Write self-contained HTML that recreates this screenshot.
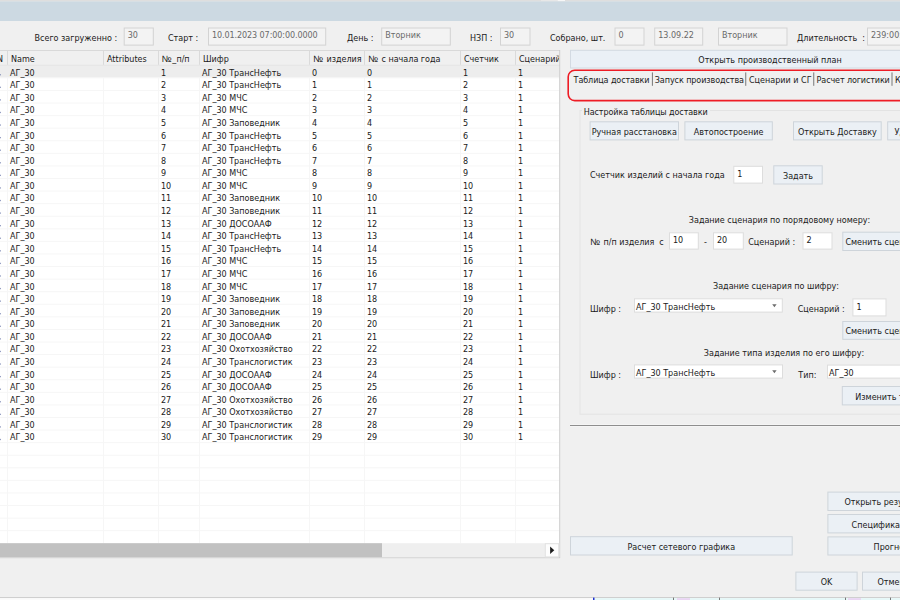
<!DOCTYPE html>
<html lang="ru"><head><meta charset="utf-8"><title>Производственный план</title>
<style>
html,body{margin:0;padding:0}
body{width:900px;height:600px;overflow:hidden;background:#f0f0f0;position:relative;
 font-family:'DejaVu Sans Condensed','DejaVu Sans','Liberation Sans',sans-serif;font-stretch:condensed;font-size:8.95px;color:#1a1a1a;line-height:12px}
div{position:absolute;white-space:nowrap;box-sizing:border-box;height:12px;line-height:12px}
svg{position:absolute;left:0;top:0}
.g{color:#6a6a6a}
.c{text-align:center}
span.no{font-family:'Liberation Sans',sans-serif;font-stretch:normal;font-size:9.2px;margin-right:1px}
#tb{left:0;top:0;width:559px;height:600px;overflow:hidden}
</style></head><body>
<svg width="900" height="600" viewBox="0 0 900 600">
<rect x="0.00" y="0.00" width="900.00" height="1.40" fill="#dedede"/>
<rect x="541.00" y="0.00" width="16.60" height="1.20" fill="#e7e7e7"/>
<rect x="557.60" y="0.00" width="7.40" height="1.20" fill="#f6f6f6"/>
<rect x="0.00" y="1.40" width="900.00" height="19.60" fill="#ccd9e2"/>
<rect x="124.20" y="28.00" width="29.10" height="17.10" fill="#f3f3f3" stroke="#d3d3d3" stroke-width="1"/>
<rect x="208.50" y="28.00" width="117.20" height="17.10" fill="#f3f3f3" stroke="#d3d3d3" stroke-width="1"/>
<rect x="381.70" y="28.00" width="68.60" height="17.10" fill="#f3f3f3" stroke="#d3d3d3" stroke-width="1"/>
<rect x="500.50" y="28.00" width="29.50" height="17.10" fill="#f3f3f3" stroke="#d3d3d3" stroke-width="1"/>
<rect x="615.00" y="28.00" width="29.00" height="17.10" fill="#f3f3f3" stroke="#d3d3d3" stroke-width="1"/>
<rect x="654.70" y="28.00" width="48.00" height="17.10" fill="#f3f3f3" stroke="#d3d3d3" stroke-width="1"/>
<rect x="718.50" y="28.00" width="68.50" height="17.10" fill="#f3f3f3" stroke="#d3d3d3" stroke-width="1"/>
<rect x="867.50" y="28.00" width="92.00" height="17.10" fill="#f3f3f3" stroke="#d3d3d3" stroke-width="1"/>
<rect x="0.00" y="50.00" width="560.00" height="508.00" fill="#ffffff"/>
<rect x="0.00" y="50.00" width="559.50" height="15.30" fill="#f0f0f0"/>
<rect x="0.00" y="50.00" width="560.00" height="1" fill="#d9d9d9"/>
<rect x="0.00" y="64.80" width="560.00" height="1" fill="#dedede"/>
<rect x="0.00" y="65.70" width="559.50" height="11.88" fill="#ededed"/>
<rect x="0.00" y="77.38" width="559.50" height="1" fill="#f6f6f6"/>
<rect x="0.00" y="89.96" width="559.50" height="1" fill="#f6f6f6"/>
<rect x="0.00" y="102.53" width="559.50" height="1" fill="#f6f6f6"/>
<rect x="0.00" y="115.11" width="559.50" height="1" fill="#f6f6f6"/>
<rect x="0.00" y="127.69" width="559.50" height="1" fill="#f6f6f6"/>
<rect x="0.00" y="140.27" width="559.50" height="1" fill="#f6f6f6"/>
<rect x="0.00" y="152.85" width="559.50" height="1" fill="#f6f6f6"/>
<rect x="0.00" y="165.42" width="559.50" height="1" fill="#f6f6f6"/>
<rect x="0.00" y="178.00" width="559.50" height="1" fill="#f6f6f6"/>
<rect x="0.00" y="190.58" width="559.50" height="1" fill="#f6f6f6"/>
<rect x="0.00" y="203.16" width="559.50" height="1" fill="#f6f6f6"/>
<rect x="0.00" y="215.74" width="559.50" height="1" fill="#f6f6f6"/>
<rect x="0.00" y="228.31" width="559.50" height="1" fill="#f6f6f6"/>
<rect x="0.00" y="240.89" width="559.50" height="1" fill="#f6f6f6"/>
<rect x="0.00" y="253.47" width="559.50" height="1" fill="#f6f6f6"/>
<rect x="0.00" y="266.05" width="559.50" height="1" fill="#f6f6f6"/>
<rect x="0.00" y="278.63" width="559.50" height="1" fill="#f6f6f6"/>
<rect x="0.00" y="291.20" width="559.50" height="1" fill="#f6f6f6"/>
<rect x="0.00" y="303.78" width="559.50" height="1" fill="#f6f6f6"/>
<rect x="0.00" y="316.36" width="559.50" height="1" fill="#f6f6f6"/>
<rect x="0.00" y="328.94" width="559.50" height="1" fill="#f6f6f6"/>
<rect x="0.00" y="341.52" width="559.50" height="1" fill="#f6f6f6"/>
<rect x="0.00" y="354.09" width="559.50" height="1" fill="#f6f6f6"/>
<rect x="0.00" y="366.67" width="559.50" height="1" fill="#f6f6f6"/>
<rect x="0.00" y="379.25" width="559.50" height="1" fill="#f6f6f6"/>
<rect x="0.00" y="391.83" width="559.50" height="1" fill="#f6f6f6"/>
<rect x="0.00" y="404.41" width="559.50" height="1" fill="#f6f6f6"/>
<rect x="0.00" y="416.98" width="559.50" height="1" fill="#f6f6f6"/>
<rect x="0.00" y="429.56" width="559.50" height="1" fill="#f6f6f6"/>
<rect x="0.00" y="442.14" width="559.50" height="1" fill="#f6f6f6"/>
<rect x="0.00" y="454.72" width="559.50" height="1" fill="#f6f6f6"/>
<rect x="0.00" y="467.30" width="559.50" height="1" fill="#f6f6f6"/>
<rect x="0.00" y="479.87" width="559.50" height="1" fill="#f6f6f6"/>
<rect x="0.00" y="492.45" width="559.50" height="1" fill="#f6f6f6"/>
<rect x="0.00" y="505.03" width="559.50" height="1" fill="#f6f6f6"/>
<rect x="0.00" y="517.61" width="559.50" height="1" fill="#f6f6f6"/>
<rect x="0.00" y="530.19" width="559.50" height="1" fill="#f6f6f6"/>
<rect x="7.00" y="51.00" width="1" height="13.80" fill="#dadada"/>
<rect x="7.00" y="77.88" width="1" height="465.32" fill="#f6f6f6"/>
<rect x="103.00" y="51.00" width="1" height="13.80" fill="#dadada"/>
<rect x="103.00" y="77.88" width="1" height="465.32" fill="#f6f6f6"/>
<rect x="158.00" y="51.00" width="1" height="13.80" fill="#dadada"/>
<rect x="158.00" y="77.88" width="1" height="465.32" fill="#f6f6f6"/>
<rect x="199.00" y="51.00" width="1" height="13.80" fill="#dadada"/>
<rect x="199.00" y="77.88" width="1" height="465.32" fill="#f6f6f6"/>
<rect x="309.00" y="51.00" width="1" height="13.80" fill="#dadada"/>
<rect x="309.00" y="77.88" width="1" height="465.32" fill="#f6f6f6"/>
<rect x="364.00" y="51.00" width="1" height="13.80" fill="#dadada"/>
<rect x="364.00" y="77.88" width="1" height="465.32" fill="#f6f6f6"/>
<rect x="460.00" y="51.00" width="1" height="13.80" fill="#dadada"/>
<rect x="460.00" y="77.88" width="1" height="465.32" fill="#f6f6f6"/>
<rect x="515.00" y="51.00" width="1" height="13.80" fill="#dadada"/>
<rect x="515.00" y="77.88" width="1" height="465.32" fill="#f6f6f6"/>
<rect x="559.20" y="50.00" width="1" height="508.00" fill="#cdcdcd"/>
<rect x="0.00" y="557.20" width="560.00" height="1" fill="#cdcdcd"/>
<rect x="0.00" y="74.09" width="0.80" height="1.30" fill="#7c88b4"/>
<rect x="0.00" y="86.67" width="0.80" height="1.30" fill="#7c88b4"/>
<rect x="0.00" y="99.25" width="0.80" height="1.30" fill="#7c88b4"/>
<rect x="0.00" y="111.82" width="0.80" height="1.30" fill="#7c88b4"/>
<rect x="0.00" y="124.40" width="0.80" height="1.30" fill="#7c88b4"/>
<rect x="0.00" y="136.98" width="0.80" height="1.30" fill="#7c88b4"/>
<rect x="0.00" y="149.56" width="0.80" height="1.30" fill="#7c88b4"/>
<rect x="0.00" y="162.13" width="0.80" height="1.30" fill="#7c88b4"/>
<rect x="0.00" y="174.71" width="0.80" height="1.30" fill="#7c88b4"/>
<rect x="0.00" y="187.29" width="0.80" height="1.30" fill="#7c88b4"/>
<rect x="0.00" y="199.87" width="0.80" height="1.30" fill="#7c88b4"/>
<rect x="0.00" y="212.45" width="0.80" height="1.30" fill="#7c88b4"/>
<rect x="0.00" y="225.02" width="0.80" height="1.30" fill="#7c88b4"/>
<rect x="0.00" y="237.60" width="0.80" height="1.30" fill="#7c88b4"/>
<rect x="0.00" y="250.18" width="0.80" height="1.30" fill="#7c88b4"/>
<rect x="0.00" y="262.76" width="0.80" height="1.30" fill="#7c88b4"/>
<rect x="0.00" y="275.34" width="0.80" height="1.30" fill="#7c88b4"/>
<rect x="0.00" y="287.91" width="0.80" height="1.30" fill="#7c88b4"/>
<rect x="0.00" y="300.49" width="0.80" height="1.30" fill="#7c88b4"/>
<rect x="0.00" y="313.07" width="0.80" height="1.30" fill="#7c88b4"/>
<rect x="0.00" y="325.65" width="0.80" height="1.30" fill="#7c88b4"/>
<rect x="0.00" y="338.23" width="0.80" height="1.30" fill="#7c88b4"/>
<rect x="0.00" y="350.81" width="0.80" height="1.30" fill="#7c88b4"/>
<rect x="0.00" y="363.38" width="0.80" height="1.30" fill="#7c88b4"/>
<rect x="0.00" y="375.96" width="0.80" height="1.30" fill="#7c88b4"/>
<rect x="0.00" y="388.54" width="0.80" height="1.30" fill="#7c88b4"/>
<rect x="0.00" y="401.12" width="0.80" height="1.30" fill="#7c88b4"/>
<rect x="0.00" y="413.69" width="0.80" height="1.30" fill="#7c88b4"/>
<rect x="0.00" y="426.27" width="0.80" height="1.30" fill="#7c88b4"/>
<rect x="0.00" y="438.85" width="0.80" height="1.30" fill="#7c88b4"/>
<rect x="0.00" y="543.20" width="559.20" height="14.00" fill="#efefef"/>
<rect x="0.00" y="543.20" width="382.00" height="14.00" fill="#c1c1c1"/>
<rect x="545.30" y="543.70" width="13.40" height="13.20" fill="#fdfdfd" stroke="#e2e2e2" stroke-width="1"/>
<polygon points="550.1,546.6 554.3,550.3 550.1,554" fill="#1e1e1e"/>
<rect x="570.50" y="50.30" width="399.00" height="17.70" fill="#eaf0f6" stroke="#d3dae2" stroke-width="1"/>
<rect x="568.2" y="70.3" width="400" height="30.3" rx="6.5" fill="none" stroke="#ee1c25" stroke-width="1.6"/>
<rect x="651.90" y="72.40" width="1" height="13.40" fill="#777"/>
<rect x="745.25" y="72.40" width="1" height="13.40" fill="#777"/>
<rect x="813.25" y="72.40" width="1" height="13.40" fill="#777"/>
<rect x="891.50" y="72.40" width="1" height="13.40" fill="#777"/>
<rect x="580.00" y="110.50" width="399.50" height="303.70" fill="none" stroke="#e3e3e3" stroke-width="1"/>
<rect x="582.00" y="105.00" width="128.00" height="11.00" fill="#f0f0f0"/>
<rect x="590.10" y="121.80" width="88.40" height="18.10" fill="#ebf0f5" stroke="#ced4da" stroke-width="1"/>
<rect x="684.90" y="121.80" width="87.40" height="18.10" fill="#ebf0f5" stroke="#ced4da" stroke-width="1"/>
<rect x="793.50" y="121.80" width="87.70" height="18.10" fill="#ebf0f5" stroke="#ced4da" stroke-width="1"/>
<rect x="887.70" y="121.80" width="86.80" height="18.10" fill="#ebf0f5" stroke="#ced4da" stroke-width="1"/>
<rect x="733.80" y="166.30" width="28.70" height="16.80" fill="#ffffff" stroke="#dddddd" stroke-width="1"/>
<rect x="773.80" y="165.80" width="48.40" height="18.20" fill="#ebf0f5" stroke="#ced4da" stroke-width="1"/>
<rect x="669.50" y="232.80" width="28.80" height="16.30" fill="#ffffff" stroke="#dddddd" stroke-width="1"/>
<rect x="713.50" y="232.80" width="29.80" height="16.30" fill="#ffffff" stroke="#dddddd" stroke-width="1"/>
<rect x="803.00" y="232.80" width="29.00" height="16.30" fill="#ffffff" stroke="#dddddd" stroke-width="1"/>
<rect x="842.80" y="232.20" width="96.70" height="18.30" fill="#ebf0f5" stroke="#ced4da" stroke-width="1"/>
<rect x="634.50" y="298.80" width="147.80" height="13.30" fill="#ffffff" stroke="#dddddd" stroke-width="1"/>
<polygon points="772.2,304.3 776.6,304.3 774.4,307.3" fill="#6c6c6c"/>
<rect x="852.90" y="298.90" width="33.10" height="17.00" fill="#ffffff" stroke="#dddddd" stroke-width="1"/>
<rect x="842.80" y="321.50" width="96.70" height="17.80" fill="#ebf0f5" stroke="#ced4da" stroke-width="1"/>
<rect x="634.50" y="364.90" width="148.00" height="13.20" fill="#ffffff" stroke="#dddddd" stroke-width="1"/>
<polygon points="772.2,370.3 776.6,370.3 774.4,373.3" fill="#6c6c6c"/>
<rect x="827.50" y="365.10" width="132.00" height="13.00" fill="#ffffff" stroke="#dddddd" stroke-width="1"/>
<rect x="842.30" y="386.50" width="117.20" height="18.40" fill="#ebf0f5" stroke="#ced4da" stroke-width="1"/>
<rect x="570.00" y="424.20" width="330.00" height="2.6" fill="#f7f7f7"/>
<rect x="570.00" y="425.00" width="330.00" height="1" fill="#8e8e8e"/>
<rect x="827.90" y="492.10" width="131.60" height="18.40" fill="#ebf0f5" stroke="#ced4da" stroke-width="1"/>
<rect x="827.90" y="514.50" width="131.60" height="18.40" fill="#ebf0f5" stroke="#ced4da" stroke-width="1"/>
<rect x="827.90" y="536.90" width="131.60" height="18.10" fill="#ebf0f5" stroke="#ced4da" stroke-width="1"/>
<rect x="570.50" y="536.70" width="221.70" height="18.30" fill="#ebf0f5" stroke="#ced4da" stroke-width="1"/>
<rect x="795.90" y="572.10" width="61.20" height="18.10" fill="#ebf0f5" stroke="#ced4da" stroke-width="1"/>
<rect x="862.50" y="572.10" width="97.00" height="18.10" fill="#ebf0f5" stroke="#ced4da" stroke-width="1"/>
<rect x="0.00" y="597.10" width="900.00" height="1" fill="#cbcbcb"/>
<rect x="0.00" y="598.10" width="900.00" height="1.90" fill="#fbfbfb"/>
<rect x="593.00" y="598.10" width="307.00" height="1.90" fill="#e6f8f8"/>
<rect x="593.00" y="597.60" width="1.50" height="2.40" fill="#2030d0"/>
<rect x="673.00" y="597.60" width="1.00" height="2.40" fill="#777"/>
<rect x="719.00" y="597.60" width="1.00" height="2.40" fill="#777"/>
<rect x="845.00" y="597.60" width="1.00" height="2.40" fill="#777"/>
<rect x="890.00" y="597.60" width="1.00" height="2.40" fill="#777"/>
<rect x="677.00" y="598.10" width="13.00" height="1.90" fill="#ead6f3"/>
<rect x="848.00" y="598.10" width="13.00" height="1.90" fill="#ead6f3"/>
</svg>
<div id="tb">
<div style="left:-3.00px;top:53.00px;">N</div>
<div style="left:11.00px;top:53.00px;">Name</div>
<div style="left:107.00px;top:53.00px;">Attributes</div>
<div style="left:161.50px;top:53.00px;"><span class="no">№</span>_п/п</div>
<div style="left:203.00px;top:53.00px;">Шифр</div>
<div style="left:313.00px;top:53.00px;"><span class="no">№</span> изделия</div>
<div style="left:368.00px;top:53.00px;"><span class="no">№</span> с начала года</div>
<div style="left:464.00px;top:53.00px;">Счетчик</div>
<div style="left:519.00px;top:53.00px;">Сценарий</div>
<div style="left:10.00px;top:66.69px;">АГ_30</div>
<div style="left:161.00px;top:66.69px;">1</div>
<div style="left:202.00px;top:66.69px;">АГ_30 ТрансНефть</div>
<div style="left:312.00px;top:66.69px;">0</div>
<div style="left:367.00px;top:66.69px;">0</div>
<div style="left:463.00px;top:66.69px;">1</div>
<div style="left:518.00px;top:66.69px;">1</div>
<div style="left:10.00px;top:79.27px;">АГ_30</div>
<div style="left:161.00px;top:79.27px;">2</div>
<div style="left:202.00px;top:79.27px;">АГ_30 ТрансНефть</div>
<div style="left:312.00px;top:79.27px;">1</div>
<div style="left:367.00px;top:79.27px;">1</div>
<div style="left:463.00px;top:79.27px;">2</div>
<div style="left:518.00px;top:79.27px;">1</div>
<div style="left:10.00px;top:91.84px;">АГ_30</div>
<div style="left:161.00px;top:91.84px;">3</div>
<div style="left:202.00px;top:91.84px;">АГ_30 МЧС</div>
<div style="left:312.00px;top:91.84px;">2</div>
<div style="left:367.00px;top:91.84px;">2</div>
<div style="left:463.00px;top:91.84px;">3</div>
<div style="left:518.00px;top:91.84px;">1</div>
<div style="left:10.00px;top:104.42px;">АГ_30</div>
<div style="left:161.00px;top:104.42px;">4</div>
<div style="left:202.00px;top:104.42px;">АГ_30 МЧС</div>
<div style="left:312.00px;top:104.42px;">3</div>
<div style="left:367.00px;top:104.42px;">3</div>
<div style="left:463.00px;top:104.42px;">4</div>
<div style="left:518.00px;top:104.42px;">1</div>
<div style="left:10.00px;top:117.00px;">АГ_30</div>
<div style="left:161.00px;top:117.00px;">5</div>
<div style="left:202.00px;top:117.00px;">АГ_30 Заповедник</div>
<div style="left:312.00px;top:117.00px;">4</div>
<div style="left:367.00px;top:117.00px;">4</div>
<div style="left:463.00px;top:117.00px;">5</div>
<div style="left:518.00px;top:117.00px;">1</div>
<div style="left:10.00px;top:129.58px;">АГ_30</div>
<div style="left:161.00px;top:129.58px;">6</div>
<div style="left:202.00px;top:129.58px;">АГ_30 ТрансНефть</div>
<div style="left:312.00px;top:129.58px;">5</div>
<div style="left:367.00px;top:129.58px;">5</div>
<div style="left:463.00px;top:129.58px;">6</div>
<div style="left:518.00px;top:129.58px;">1</div>
<div style="left:10.00px;top:142.16px;">АГ_30</div>
<div style="left:161.00px;top:142.16px;">7</div>
<div style="left:202.00px;top:142.16px;">АГ_30 ТрансНефть</div>
<div style="left:312.00px;top:142.16px;">6</div>
<div style="left:367.00px;top:142.16px;">6</div>
<div style="left:463.00px;top:142.16px;">7</div>
<div style="left:518.00px;top:142.16px;">1</div>
<div style="left:10.00px;top:154.74px;">АГ_30</div>
<div style="left:161.00px;top:154.74px;">8</div>
<div style="left:202.00px;top:154.74px;">АГ_30 ТрансНефть</div>
<div style="left:312.00px;top:154.74px;">7</div>
<div style="left:367.00px;top:154.74px;">7</div>
<div style="left:463.00px;top:154.74px;">8</div>
<div style="left:518.00px;top:154.74px;">1</div>
<div style="left:10.00px;top:167.31px;">АГ_30</div>
<div style="left:161.00px;top:167.31px;">9</div>
<div style="left:202.00px;top:167.31px;">АГ_30 МЧС</div>
<div style="left:312.00px;top:167.31px;">8</div>
<div style="left:367.00px;top:167.31px;">8</div>
<div style="left:463.00px;top:167.31px;">9</div>
<div style="left:518.00px;top:167.31px;">1</div>
<div style="left:10.00px;top:179.89px;">АГ_30</div>
<div style="left:161.00px;top:179.89px;">10</div>
<div style="left:202.00px;top:179.89px;">АГ_30 МЧС</div>
<div style="left:312.00px;top:179.89px;">9</div>
<div style="left:367.00px;top:179.89px;">9</div>
<div style="left:463.00px;top:179.89px;">10</div>
<div style="left:518.00px;top:179.89px;">1</div>
<div style="left:10.00px;top:192.47px;">АГ_30</div>
<div style="left:161.00px;top:192.47px;">11</div>
<div style="left:202.00px;top:192.47px;">АГ_30 Заповедник</div>
<div style="left:312.00px;top:192.47px;">10</div>
<div style="left:367.00px;top:192.47px;">10</div>
<div style="left:463.00px;top:192.47px;">11</div>
<div style="left:518.00px;top:192.47px;">1</div>
<div style="left:10.00px;top:205.05px;">АГ_30</div>
<div style="left:161.00px;top:205.05px;">12</div>
<div style="left:202.00px;top:205.05px;">АГ_30 Заповедник</div>
<div style="left:312.00px;top:205.05px;">11</div>
<div style="left:367.00px;top:205.05px;">11</div>
<div style="left:463.00px;top:205.05px;">12</div>
<div style="left:518.00px;top:205.05px;">1</div>
<div style="left:10.00px;top:217.62px;">АГ_30</div>
<div style="left:161.00px;top:217.62px;">13</div>
<div style="left:202.00px;top:217.62px;">АГ_30 ДОСОААФ</div>
<div style="left:312.00px;top:217.62px;">12</div>
<div style="left:367.00px;top:217.62px;">12</div>
<div style="left:463.00px;top:217.62px;">13</div>
<div style="left:518.00px;top:217.62px;">1</div>
<div style="left:10.00px;top:230.20px;">АГ_30</div>
<div style="left:161.00px;top:230.20px;">14</div>
<div style="left:202.00px;top:230.20px;">АГ_30 ТрансНефть</div>
<div style="left:312.00px;top:230.20px;">13</div>
<div style="left:367.00px;top:230.20px;">13</div>
<div style="left:463.00px;top:230.20px;">14</div>
<div style="left:518.00px;top:230.20px;">1</div>
<div style="left:10.00px;top:242.78px;">АГ_30</div>
<div style="left:161.00px;top:242.78px;">15</div>
<div style="left:202.00px;top:242.78px;">АГ_30 ТрансНефть</div>
<div style="left:312.00px;top:242.78px;">14</div>
<div style="left:367.00px;top:242.78px;">14</div>
<div style="left:463.00px;top:242.78px;">15</div>
<div style="left:518.00px;top:242.78px;">1</div>
<div style="left:10.00px;top:255.36px;">АГ_30</div>
<div style="left:161.00px;top:255.36px;">16</div>
<div style="left:202.00px;top:255.36px;">АГ_30 МЧС</div>
<div style="left:312.00px;top:255.36px;">15</div>
<div style="left:367.00px;top:255.36px;">15</div>
<div style="left:463.00px;top:255.36px;">16</div>
<div style="left:518.00px;top:255.36px;">1</div>
<div style="left:10.00px;top:267.94px;">АГ_30</div>
<div style="left:161.00px;top:267.94px;">17</div>
<div style="left:202.00px;top:267.94px;">АГ_30 МЧС</div>
<div style="left:312.00px;top:267.94px;">16</div>
<div style="left:367.00px;top:267.94px;">16</div>
<div style="left:463.00px;top:267.94px;">17</div>
<div style="left:518.00px;top:267.94px;">1</div>
<div style="left:10.00px;top:280.51px;">АГ_30</div>
<div style="left:161.00px;top:280.51px;">18</div>
<div style="left:202.00px;top:280.51px;">АГ_30 МЧС</div>
<div style="left:312.00px;top:280.51px;">17</div>
<div style="left:367.00px;top:280.51px;">17</div>
<div style="left:463.00px;top:280.51px;">18</div>
<div style="left:518.00px;top:280.51px;">1</div>
<div style="left:10.00px;top:293.09px;">АГ_30</div>
<div style="left:161.00px;top:293.09px;">19</div>
<div style="left:202.00px;top:293.09px;">АГ_30 Заповедник</div>
<div style="left:312.00px;top:293.09px;">18</div>
<div style="left:367.00px;top:293.09px;">18</div>
<div style="left:463.00px;top:293.09px;">19</div>
<div style="left:518.00px;top:293.09px;">1</div>
<div style="left:10.00px;top:305.67px;">АГ_30</div>
<div style="left:161.00px;top:305.67px;">20</div>
<div style="left:202.00px;top:305.67px;">АГ_30 Заповедник</div>
<div style="left:312.00px;top:305.67px;">19</div>
<div style="left:367.00px;top:305.67px;">19</div>
<div style="left:463.00px;top:305.67px;">20</div>
<div style="left:518.00px;top:305.67px;">1</div>
<div style="left:10.00px;top:318.25px;">АГ_30</div>
<div style="left:161.00px;top:318.25px;">21</div>
<div style="left:202.00px;top:318.25px;">АГ_30 Заповедник</div>
<div style="left:312.00px;top:318.25px;">20</div>
<div style="left:367.00px;top:318.25px;">20</div>
<div style="left:463.00px;top:318.25px;">21</div>
<div style="left:518.00px;top:318.25px;">1</div>
<div style="left:10.00px;top:330.83px;">АГ_30</div>
<div style="left:161.00px;top:330.83px;">22</div>
<div style="left:202.00px;top:330.83px;">АГ_30 ДОСОААФ</div>
<div style="left:312.00px;top:330.83px;">21</div>
<div style="left:367.00px;top:330.83px;">21</div>
<div style="left:463.00px;top:330.83px;">22</div>
<div style="left:518.00px;top:330.83px;">1</div>
<div style="left:10.00px;top:343.41px;">АГ_30</div>
<div style="left:161.00px;top:343.41px;">23</div>
<div style="left:202.00px;top:343.41px;">АГ_30 Охотхозяйство</div>
<div style="left:312.00px;top:343.41px;">22</div>
<div style="left:367.00px;top:343.41px;">22</div>
<div style="left:463.00px;top:343.41px;">23</div>
<div style="left:518.00px;top:343.41px;">1</div>
<div style="left:10.00px;top:355.98px;">АГ_30</div>
<div style="left:161.00px;top:355.98px;">24</div>
<div style="left:202.00px;top:355.98px;">АГ_30 Транслогистик</div>
<div style="left:312.00px;top:355.98px;">23</div>
<div style="left:367.00px;top:355.98px;">23</div>
<div style="left:463.00px;top:355.98px;">24</div>
<div style="left:518.00px;top:355.98px;">1</div>
<div style="left:10.00px;top:368.56px;">АГ_30</div>
<div style="left:161.00px;top:368.56px;">25</div>
<div style="left:202.00px;top:368.56px;">АГ_30 ДОСОААФ</div>
<div style="left:312.00px;top:368.56px;">24</div>
<div style="left:367.00px;top:368.56px;">24</div>
<div style="left:463.00px;top:368.56px;">25</div>
<div style="left:518.00px;top:368.56px;">1</div>
<div style="left:10.00px;top:381.14px;">АГ_30</div>
<div style="left:161.00px;top:381.14px;">26</div>
<div style="left:202.00px;top:381.14px;">АГ_30 ДОСОААФ</div>
<div style="left:312.00px;top:381.14px;">25</div>
<div style="left:367.00px;top:381.14px;">25</div>
<div style="left:463.00px;top:381.14px;">26</div>
<div style="left:518.00px;top:381.14px;">1</div>
<div style="left:10.00px;top:393.72px;">АГ_30</div>
<div style="left:161.00px;top:393.72px;">27</div>
<div style="left:202.00px;top:393.72px;">АГ_30 Охотхозяйство</div>
<div style="left:312.00px;top:393.72px;">26</div>
<div style="left:367.00px;top:393.72px;">26</div>
<div style="left:463.00px;top:393.72px;">27</div>
<div style="left:518.00px;top:393.72px;">1</div>
<div style="left:10.00px;top:406.30px;">АГ_30</div>
<div style="left:161.00px;top:406.30px;">28</div>
<div style="left:202.00px;top:406.30px;">АГ_30 Охотхозяйство</div>
<div style="left:312.00px;top:406.30px;">27</div>
<div style="left:367.00px;top:406.30px;">27</div>
<div style="left:463.00px;top:406.30px;">28</div>
<div style="left:518.00px;top:406.30px;">1</div>
<div style="left:10.00px;top:418.87px;">АГ_30</div>
<div style="left:161.00px;top:418.87px;">29</div>
<div style="left:202.00px;top:418.87px;">АГ_30 Транслогистик</div>
<div style="left:312.00px;top:418.87px;">28</div>
<div style="left:367.00px;top:418.87px;">28</div>
<div style="left:463.00px;top:418.87px;">29</div>
<div style="left:518.00px;top:418.87px;">1</div>
<div style="left:10.00px;top:431.45px;">АГ_30</div>
<div style="left:161.00px;top:431.45px;">30</div>
<div style="left:202.00px;top:431.45px;">АГ_30 Транслогистик</div>
<div style="left:312.00px;top:431.45px;">29</div>
<div style="left:367.00px;top:431.45px;">29</div>
<div style="left:463.00px;top:431.45px;">30</div>
<div style="left:518.00px;top:431.45px;">1</div>
</div>
<div style="left:34.50px;top:31.80px;">Всего загруженно :</div>
<div class="g" style="left:127.70px;top:29.35px;">30</div>
<div style="left:168.00px;top:31.80px;">Старт :</div>
<div class="g" style="left:212.00px;top:29.35px;letter-spacing:-0.09px;">10.01.2023 07:00:00.0000</div>
<div style="left:347.00px;top:31.80px;">День :</div>
<div class="g" style="left:385.20px;top:29.35px;">Вторник</div>
<div style="left:470.00px;top:31.80px;">НЗП :</div>
<div class="g" style="left:504.00px;top:29.35px;">30</div>
<div style="left:550.00px;top:31.80px;">Собрано, шт.</div>
<div class="g" style="left:618.50px;top:29.35px;">0</div>
<div class="g" style="left:658.20px;top:29.35px;">13.09.22</div>
<div class="g" style="left:722.00px;top:29.35px;">Вторник</div>
<div style="left:797.00px;top:31.80px;">Длительность &nbsp;:</div>
<div class="g" style="left:871.00px;top:29.35px;">239:00:00</div>
<div class="c" style="left:570.00px;top:54.10px;width:400.00px;">Открыть производственный план</div>
<div style="left:573.60px;top:74.10px;letter-spacing:-0.1px;">Таблица доставки</div>
<div style="left:654.80px;top:74.10px;letter-spacing:-0.085px;">Запуск производства</div>
<div style="left:749.00px;top:74.10px;">Сценарии и СГ</div>
<div style="left:816.60px;top:74.10px;letter-spacing:-0.12px;">Расчет логистики</div>
<div style="left:895.00px;top:74.10px;">Контроль</div>
<div style="left:583.70px;top:106.00px;letter-spacing:-0.09px;">Настройка таблицы доставки</div>
<div class="c" style="left:589.60px;top:125.65px;width:89.40px;">Ручная расстановка</div>
<div class="c" style="left:684.40px;top:125.65px;width:88.40px;">Автопостроение</div>
<div class="c" style="left:793.00px;top:125.65px;width:88.70px;">Открыть Доставку</div>
<div style="left:894.50px;top:125.65px;">Удалить Доставку</div>
<div style="left:590.00px;top:169.10px;">Счетчик изделий с начала года</div>
<div style="left:737.30px;top:168.20px;">1</div>
<div class="c" style="left:773.30px;top:169.70px;width:49.40px;">Задать</div>
<div style="left:688.80px;top:214.30px;">Задание сценария по порядовому номеру:</div>
<div style="left:590.00px;top:236.00px;"><span class="no">№</span> п/п изделия <span style="margin-left:2.2px">с</span></div>
<div style="left:673.00px;top:234.20px;">10</div>
<div style="left:704.00px;top:235.80px;">-</div>
<div style="left:717.00px;top:234.20px;">20</div>
<div style="left:748.20px;top:236.00px;">Сценарий :</div>
<div style="left:806.50px;top:234.20px;">2</div>
<div style="left:845.40px;top:236.15px;">Сменить сценарий</div>
<div style="left:713.00px;top:280.30px;">Задание сценария по шифру:</div>
<div style="left:590.00px;top:302.60px;">Шифр :</div>
<div style="left:636.00px;top:300.50px;">АГ_30 ТрансНефть</div>
<div style="left:797.70px;top:302.60px;">Сценарий :</div>
<div style="left:856.40px;top:300.90px;">1</div>
<div style="left:845.40px;top:325.20px;">Сменить сценарий</div>
<div style="left:703.80px;top:346.80px;">Задание типа изделия по его шифру:</div>
<div style="left:590.00px;top:368.80px;">Шифр :</div>
<div style="left:636.00px;top:366.50px;">АГ_30 ТрансНефть</div>
<div style="left:798.30px;top:368.80px;">Тип:</div>
<div style="left:829.00px;top:366.80px;">АГ_30</div>
<div style="left:855.30px;top:390.50px;">Изменить тип</div>
<div style="left:844.40px;top:496.10px;">Открыть результаты</div>
<div style="left:851.60px;top:518.50px;">Спецификация</div>
<div style="left:873.60px;top:540.75px;">Прогноз</div>
<div class="c" style="left:570.00px;top:540.65px;width:222.70px;">Расчет сетевого графика</div>
<div class="c" style="left:795.40px;top:575.95px;width:62.20px;">OK</div>
<div style="left:877.40px;top:575.95px;">Отмена</div>
</body></html>
